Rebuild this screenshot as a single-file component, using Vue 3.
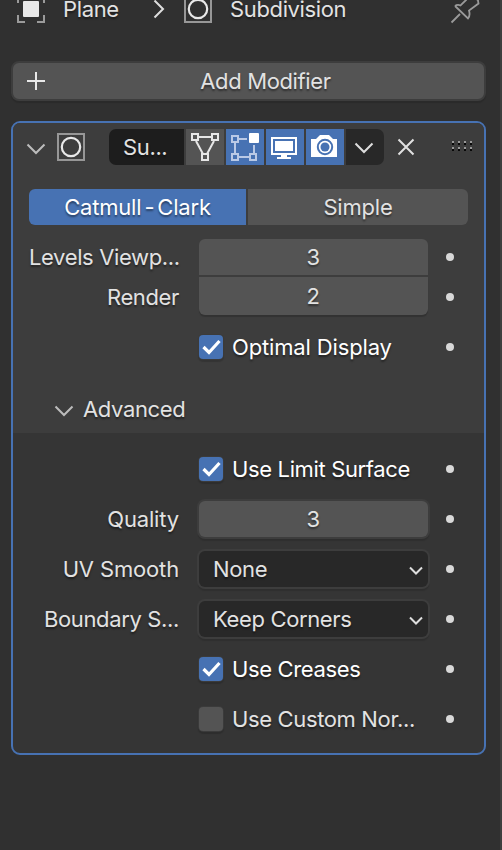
<template>
  <div class="editor">
    <div class="breadcrumb">
      <svg class="icon28" viewBox="0 0 28 28">
        <path d="M1 8V1H8 M20 1H27V8 M27 20V27H20 M8 27H1V20" fill="none" stroke="#9b9b9b" stroke-width="2" />
        <rect x="6" y="6" width="16" height="16" rx="1" fill="#e8e8e8" />
      </svg>
      <span class="crumb plane">Plane</span>
      <svg class="crumb-arrow" width="12" height="20" viewBox="0 0 12 20">
        <path d="M1.5 1.5L10 10L1.5 18.5" fill="none" stroke="#dedede" stroke-width="2" />
      </svg>
      <svg class="icon28" viewBox="0 0 28 28">
        <rect x="1" y="1" width="26" height="26" fill="none" stroke="#979797" stroke-width="2" />
        <circle cx="14" cy="14" r="9.2" fill="none" stroke="#e8e8e8" stroke-width="2.2" />
      </svg>
      <span class="crumb subdivision">Subdivision</span>
      <svg class="pin" width="32" height="36" viewBox="0 0 32 36">
        <path d="M1.5 31.5L10 23 M5 15L18 27.5Q20.5 24.500 19 19.500L28.500 12.500L28 9.500L20 1 M5 15Q7.500 13 10.500 14.500L16.500 8.500" fill="none" stroke="#9a9a9a" stroke-width="1.8" />
      </svg>
    </div>

    <button class="add-modifier">
      <svg width="18" height="18" viewBox="0 0 18 18">
        <path d="M9 0V18 M0 9H18" stroke="#e8e8e8" stroke-width="2" />
      </svg>
      <span>Add Modifier</span>
    </button>

    <div class="panel">
      <div class="panel-main">
        <div class="header">
          <svg class="chevron" width="20" height="12" viewBox="0 0 20 12">
            <path d="M1.500 1.500L10 10L18.500 1.500" fill="none" stroke="#bcbcbc" stroke-width="2" />
          </svg>
          <svg class="icon28 type-icon" viewBox="0 0 28 28">
            <rect x="1" y="1" width="26" height="26" fill="none" stroke="#979797" stroke-width="2" />
            <circle cx="14" cy="14" r="9.2" fill="none" stroke="#e8e8e8" stroke-width="2.2" />
          </svg>
          <div class="toolbar">
            <div class="name">Su...</div>
            <div class="tool">
              <svg width="38" height="36" viewBox="0 0 38 36">
                <g fill="none" stroke="#e6e6e6" stroke-width="2">
                  <rect x="6" y="5" width="6" height="6" />
                  <rect x="26" y="5" width="6" height="6" />
                  <rect x="16" y="25" width="6" height="6" />
                  <path d="M12 8H26 M10 12L17 25 M28 12L21 25" />
                </g>
              </svg>
            </div>
            <div class="tool on">
              <svg width="38" height="36" viewBox="0 0 38 36">
                <g fill="none" stroke="#b9c9e6" stroke-width="2">
                  <rect x="6" y="7" width="6" height="6" />
                  <rect x="6" y="25" width="6" height="6" />
                  <rect x="24" y="25" width="6" height="6" />
                  <path d="M12 10H21 M9 13V25 M12 28H24 M28 16V25" />
                </g>
                <rect x="23" y="4" width="10" height="10" rx="1" fill="#fff" />
              </svg>
            </div>
            <div class="tool on">
              <svg width="38" height="36" viewBox="0 0 38 36">
                <rect x="6" y="9" width="24" height="16" fill="none" stroke="#fff" stroke-width="2" />
                <rect x="9" y="12" width="18" height="10" fill="#fff" />
                <path d="M15 26H21V28H25V30H11V28H15Z" fill="#fff" />
              </svg>
            </div>
            <div class="tool on">
              <svg width="38" height="36" viewBox="0 0 38 36">
                <path d="M5 10H10L14 6H23L27 10H31V28H5Z" fill="#fff" />
                <circle cx="19" cy="18" r="7.200" fill="none" stroke="#4772b3" stroke-width="2" />
                <circle cx="19" cy="18" r="4.500" fill="#4772b3" />
              </svg>
            </div>
            <div class="tool menu">
              <svg width="20" height="12" viewBox="0 0 20 12">
                <path d="M1.500 1.500L10 10L18.500 1.500" fill="none" stroke="#dedede" stroke-width="2" />
              </svg>
            </div>
          </div>
          <svg class="close" width="18" height="18" viewBox="0 0 18 18">
            <path d="M1.500 1.500L16.500 16.500 M16.500 1.500L1.500 16.500" stroke="#e0e0e0" stroke-width="2" />
          </svg>
          <svg class="grip" width="22" height="12" viewBox="0 0 22 12">
            <template v-for="x in 4" :key="x">
              <rect :x="x * 6 - 6" y="0" width="2" height="2" fill="#999" />
              <rect :x="x * 6 - 6" y="2" width="2" height="2" fill="#080808" />
              <rect :x="x * 6 - 6" y="6" width="2" height="2" fill="#999" />
              <rect :x="x * 6 - 6" y="8" width="2" height="2" fill="#080808" />
            </template>
          </svg>
        </div>

        <div class="algorithm">
          <button :class="{ active: selected === 'catmull' }" @click="selected = 'catmull'">
            Catmull<span class="hyphen">-</span>Clark
          </button>
          <button :class="{ active: selected === 'simple' }" @click="selected = 'simple'">Simple</button>
        </div>

        <div class="levels">
          <div class="row first">
            <label>Levels Viewp...</label>
            <div class="number">3</div>
            <i class="dot"></i>
          </div>
          <div class="row second">
            <label>Render</label>
            <div class="number">2</div>
            <i class="dot"></i>
          </div>
        </div>

        <div class="row optimal">
          <label></label>
          <div class="check-field">
            <span class="checkbox checked">
              <svg width="24" height="24" viewBox="0 0 24 24"><path d="M4.500 12L10 17.500L20.500 6" /></svg>
            </span>
            <span class="bright">Optimal Display</span>
          </div>
          <i class="dot"></i>
        </div>

        <div class="subheader">
          <svg class="chevron" width="20" height="12" viewBox="0 0 20 12">
            <path d="M1.500 1.500L10 10L18.500 1.500" fill="none" stroke="#bcbcbc" stroke-width="2" />
          </svg>
          <span>Advanced</span>
        </div>
      </div>

      <div class="advanced">
        <div class="row" v-for="(item, index) in advanced" :key="index">
          <label :class="{ wide: item.wide }">{{ item.label }}</label>
          <div v-if="item.kind === 'check'" class="check-field">
            <span class="checkbox" :class="{ checked: item.value }">
              <svg v-if="item.value" width="24" height="24" viewBox="0 0 24 24"><path d="M4.500 12L10 17.500L20.500 6" /></svg>
            </span>
            <span :class="{ bright: item.value }">{{ item.text }}</span>
          </div>
          <div v-else-if="item.kind === 'number'" class="number outlined">{{ item.value }}</div>
          <div v-else class="select">
            <span>{{ item.value }}</span>
            <svg width="14" height="10" viewBox="0 0 14 10">
              <path d="M1 1.500L7 7.500L13 1.500" fill="none" stroke="#dedede" stroke-width="2" />
            </svg>
          </div>
          <i class="dot"></i>
        </div>
      </div>
    </div>
  </div>
</template>

<script setup>
import { ref } from 'vue'

const selected = ref('catmull')

const advanced = ref([
  { kind: 'check', label: '', text: 'Use Limit Surface', value: true },
  { kind: 'number', label: 'Quality', value: 3, wide: true },
  { kind: 'select', label: 'UV Smooth', value: 'None', wide: true },
  { kind: 'select', label: 'Boundary S...', value: 'Keep Corners' },
  { kind: 'check', label: '', text: 'Use Creases', value: true },
  { kind: 'check', label: '', text: 'Use Custom Nor...', value: false }
])
</script>

<style>
body {
  margin: 0;
  background: #303030;
}
</style>

<style scoped>
* {
  box-sizing: border-box;
}

.editor {
  width: 502px;
  height: 850px;
  padding: 0 14px 0 11px;
  overflow: hidden;
  background: #303030;
  border-right: 2px solid #3e3e3e;
  color: #e2e2e2;
  font-family: Inter, "Liberation Sans", sans-serif;
  font-size: 22px;
  line-height: 26px;
  letter-spacing: -0.36px;
  white-space: nowrap;
  text-shadow: 0 2px 2px rgba(0, 0, 0, 0.45);
}

svg {
  display: block;
  flex: none;
}

button {
  padding: 0;
  border: 0;
  color: inherit;
  font: inherit;
  letter-spacing: inherit;
  text-shadow: inherit;
}

.icon28 {
  width: 28px;
  height: 28px;
}

.breadcrumb {
  display: flex;
  align-items: center;
  height: 36px;
  margin-top: -9px;
  padding-left: 6px;
}

.crumb {
  line-height: 18px;
}

.plane {
  width: 90px;
  margin-left: 18px;
}

.crumb-arrow {
  margin-right: 19px;
}

.subdivision {
  flex: 1;
  margin-left: 18px;
}

.pin {
  margin-right: 4px;
}

.add-modifier {
  display: flex;
  align-items: center;
  width: 475px;
  height: 40px;
  margin-top: 34px;
  padding-left: 14px;
  border: 2px solid #3d3d3d;
  border-radius: 8px;
  background: #545454;
  box-shadow: 0 2px 1px rgba(0, 0, 0, 0.12);
}

.add-modifier span {
  flex: 1;
  padding-left: 2px;
  text-align: center;
}

.panel {
  width: 475px;
  height: 634px;
  margin-top: 20px;
  border: 2px solid #4772b3;
  border-radius: 9px;
  background: #353535;
  overflow: hidden;
}

.panel-main {
  height: 310px;
  padding: 6px 16px 0;
  background: #3d3d3d;
}

.header {
  display: flex;
  align-items: center;
  height: 36px;
  margin: 0 -6px 24px -3px;
}

.chevron {
  margin-top: 3px;
}

.type-icon {
  margin-left: 11px;
}

.toolbar {
  display: flex;
  gap: 2px;
  margin-left: 24px;
  border-radius: 7px;
  overflow: hidden;
}

.name {
  width: 75px;
  height: 36px;
  padding-left: 14px;
  line-height: 36px;
  background: #1d1d1d;
}

.tool {
  display: flex;
  align-items: center;
  justify-content: center;
  width: 38px;
  height: 36px;
  background: #545454;
}

.tool.on {
  background: #4772b3;
}

.tool.menu {
  padding: 2px 2px 0 0;
  background: #282828;
}

.close {
  margin-left: 13px;
}

.grip {
  margin-left: 37px;
}

.algorithm {
  display: flex;
  gap: 2px;
  width: 439px;
  height: 36px;
  border-radius: 6px;
  overflow: hidden;
}

.algorithm button {
  flex: 1;
  background: #545454;
  letter-spacing: -0.2px;
}

.algorithm button:first-child {
  flex: none;
  width: 217px;
}

.algorithm button.active {
  background: #4772b3;
  color: #fff;
}

.hyphen {
  margin: 0 3px;
}

.row {
  display: flex;
  align-items: center;
  height: 36px;
}

.row label {
  flex: none;
  width: 150px;
  margin-right: 20px;
  text-align: right;
}

.row label.wide {
  letter-spacing: -0.15px;
}

.number,
.select,
.check-field {
  flex: none;
  width: 229px;
}

.number {
  height: 36px;
  padding-right: 1px;
  line-height: 36px;
  border-radius: 6px;
  background: #545454;
  text-align: center;
}

.dot {
  width: 8px;
  height: 8px;
  margin-left: 18px;
  border-radius: 50%;
  background: #d8d8d8;
}

.levels {
  display: flex;
  flex-direction: column;
  gap: 2px;
  margin-top: 14px;
}

.row.second {
  height: 40px;
}

.first .number {
  border-radius: 6px 6px 0 0;
}

.second .number {
  align-self: flex-start;
  height: 38px;
  line-height: 38px;
  border-radius: 0 0 6px 6px;
  box-shadow: 0 2px 1px rgba(0, 0, 0, 0.18);
}

.optimal {
  margin-top: 12px;
  letter-spacing: -0.15px;
}

.check-field {
  display: flex;
  align-items: center;
  gap: 9px;
}

.checkbox {
  width: 24px;
  height: 24px;
  border-radius: 4px;
  background: #545454;
  box-shadow: 0 0 0 1px #3b3b3b, 0 2px 1px 1px rgba(0, 0, 0, 0.15);
}

.checkbox.checked {
  background: #4772b3;
}

.checkbox path {
  fill: none;
  stroke: #fff;
  stroke-width: 3.2;
}

.bright {
  color: #fff;
}

.subheader {
  display: flex;
  align-items: center;
  gap: 9px;
  height: 36px;
  margin-top: 26px;
  padding-left: 25px;
}

.advanced {
  display: flex;
  flex-direction: column;
  gap: 14px;
  padding: 18px 16px 0;
}

.outlined,
.select {
  box-shadow: 0 0 0 2px #3d3d3d, 0 3px 1px 1px rgba(0, 0, 0, 0.12);
}

.select {
  display: flex;
  align-items: center;
  justify-content: space-between;
  height: 36px;
  padding: 0 5px 0 14px;
  border-radius: 6px;
  background: #282828;
}

.select svg {
  margin-top: 3px;
}
</style>
